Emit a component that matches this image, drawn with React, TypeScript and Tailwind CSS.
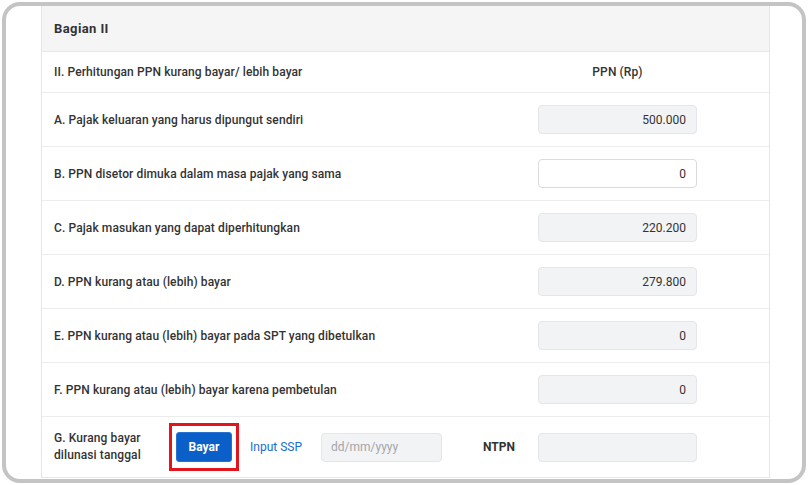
import React from "react";

type Row = { label: string; value: string; editable?: boolean };

const rows: Row[] = [
  { label: "A. Pajak keluaran yang harus dipungut sendiri", value: "500.000" },
  { label: "B. PPN disetor dimuka dalam masa pajak yang sama", value: "0", editable: true },
  { label: "C. Pajak masukan yang dapat diperhitungkan", value: "220.200" },
  { label: "D. PPN kurang atau (lebih) bayar", value: "279.800" },
  { label: "E. PPN kurang atau (lebih) bayar pada SPT yang dibetulkan", value: "0" },
  { label: "F. PPN kurang atau (lebih) bayar karena pembetulan", value: "0" },
];

function ValueBox({ value, editable }: { value: string; editable?: boolean }) {
  return (
    <div
      className={`w-[159px] h-[29px] mr-[72px] rounded-[4px] border flex items-center justify-end pr-[10px] text-[12px] text-[#333] ${
        editable ? "bg-white border-[#d9dbde]" : "bg-[#f2f3f5] border-[#e4e6e9]"
      }`}
    >
      {value}
    </div>
  );
}

export default function App() {
  return (
    <div
      className="w-[808px] h-[485px] bg-white p-[2px]"
      style={{ fontFamily: "Roboto, 'Noto Sans', sans-serif" }}
    >
      <div className="h-full border-4 border-[#c4c4c4] rounded-[18px] overflow-hidden flex">
        <div className="ml-[35px] w-[729px] mb-[1px] border-x border-b border-[#e6e6e6] flex flex-col">
          {/* header */}
          <div className="h-[46px] bg-[#f5f5f5] border-b border-[#e8e8e8] flex items-center pl-[12px]">
            <span className="text-[13px] font-bold text-[#333] tracking-[0.4px]">Bagian II</span>
          </div>

          <div className="h-[41px] border-b border-[#ececec] flex items-center pl-[12px]">
            <span className="flex-1 text-[12px] font-medium text-[#333] tracking-[0.1px]">
              II. Perhitungan PPN kurang bayar/ lebih bayar
            </span>
            <span className="w-[159px] mr-[72px] text-center text-[12px] font-medium text-[#333] tracking-[0.1px]">
              PPN (Rp)
            </span>
          </div>

          {rows.map((r) => (
            <div key={r.label} className="h-[54px] border-b border-[#ececec] flex items-center pl-[12px]">
              <span className="flex-1 text-[12px] font-medium text-[#333] tracking-[0.1px]">{r.label}</span>
              <ValueBox value={r.value} editable={r.editable} />
            </div>
          ))}

          {/* row G */}
          <div className="flex-1 flex items-center pl-[12px]">
            <span className="w-[115px] text-[12px] font-medium text-[#333] tracking-[0.1px] leading-[17px]">
              G. Kurang bayar
              <br />
              dilunasi tanggal
            </span>
            <div className="border-[3px] border-[#e3141b] px-[4px] py-[6px]">
              <button className="w-[56px] h-[30px] rounded-[3px] bg-[#0b5fc8] border border-[#2a72d0] text-white text-[12px] font-bold">
                Bayar
              </button>
            </div>
            <span className="ml-[11px] w-[71px] text-[12px] text-[#1a6dd0]">Input SSP</span>
            <div className="w-[121px] h-[29px] rounded-[4px] border border-[#e4e6e9] bg-[#f2f3f5] flex items-center pl-[9px] text-[12px] text-[#a3a6aa]">
              dd/mm/yyyy
            </div>
            <span className="ml-[41px] flex-1 text-[12px] font-bold text-[#333]">NTPN</span>
            <div className="w-[159px] h-[29px] mr-[72px] rounded-[4px] border border-[#e4e6e9] bg-[#f2f3f5]" />
          </div>
        </div>
      </div>
    </div>
  );
}
